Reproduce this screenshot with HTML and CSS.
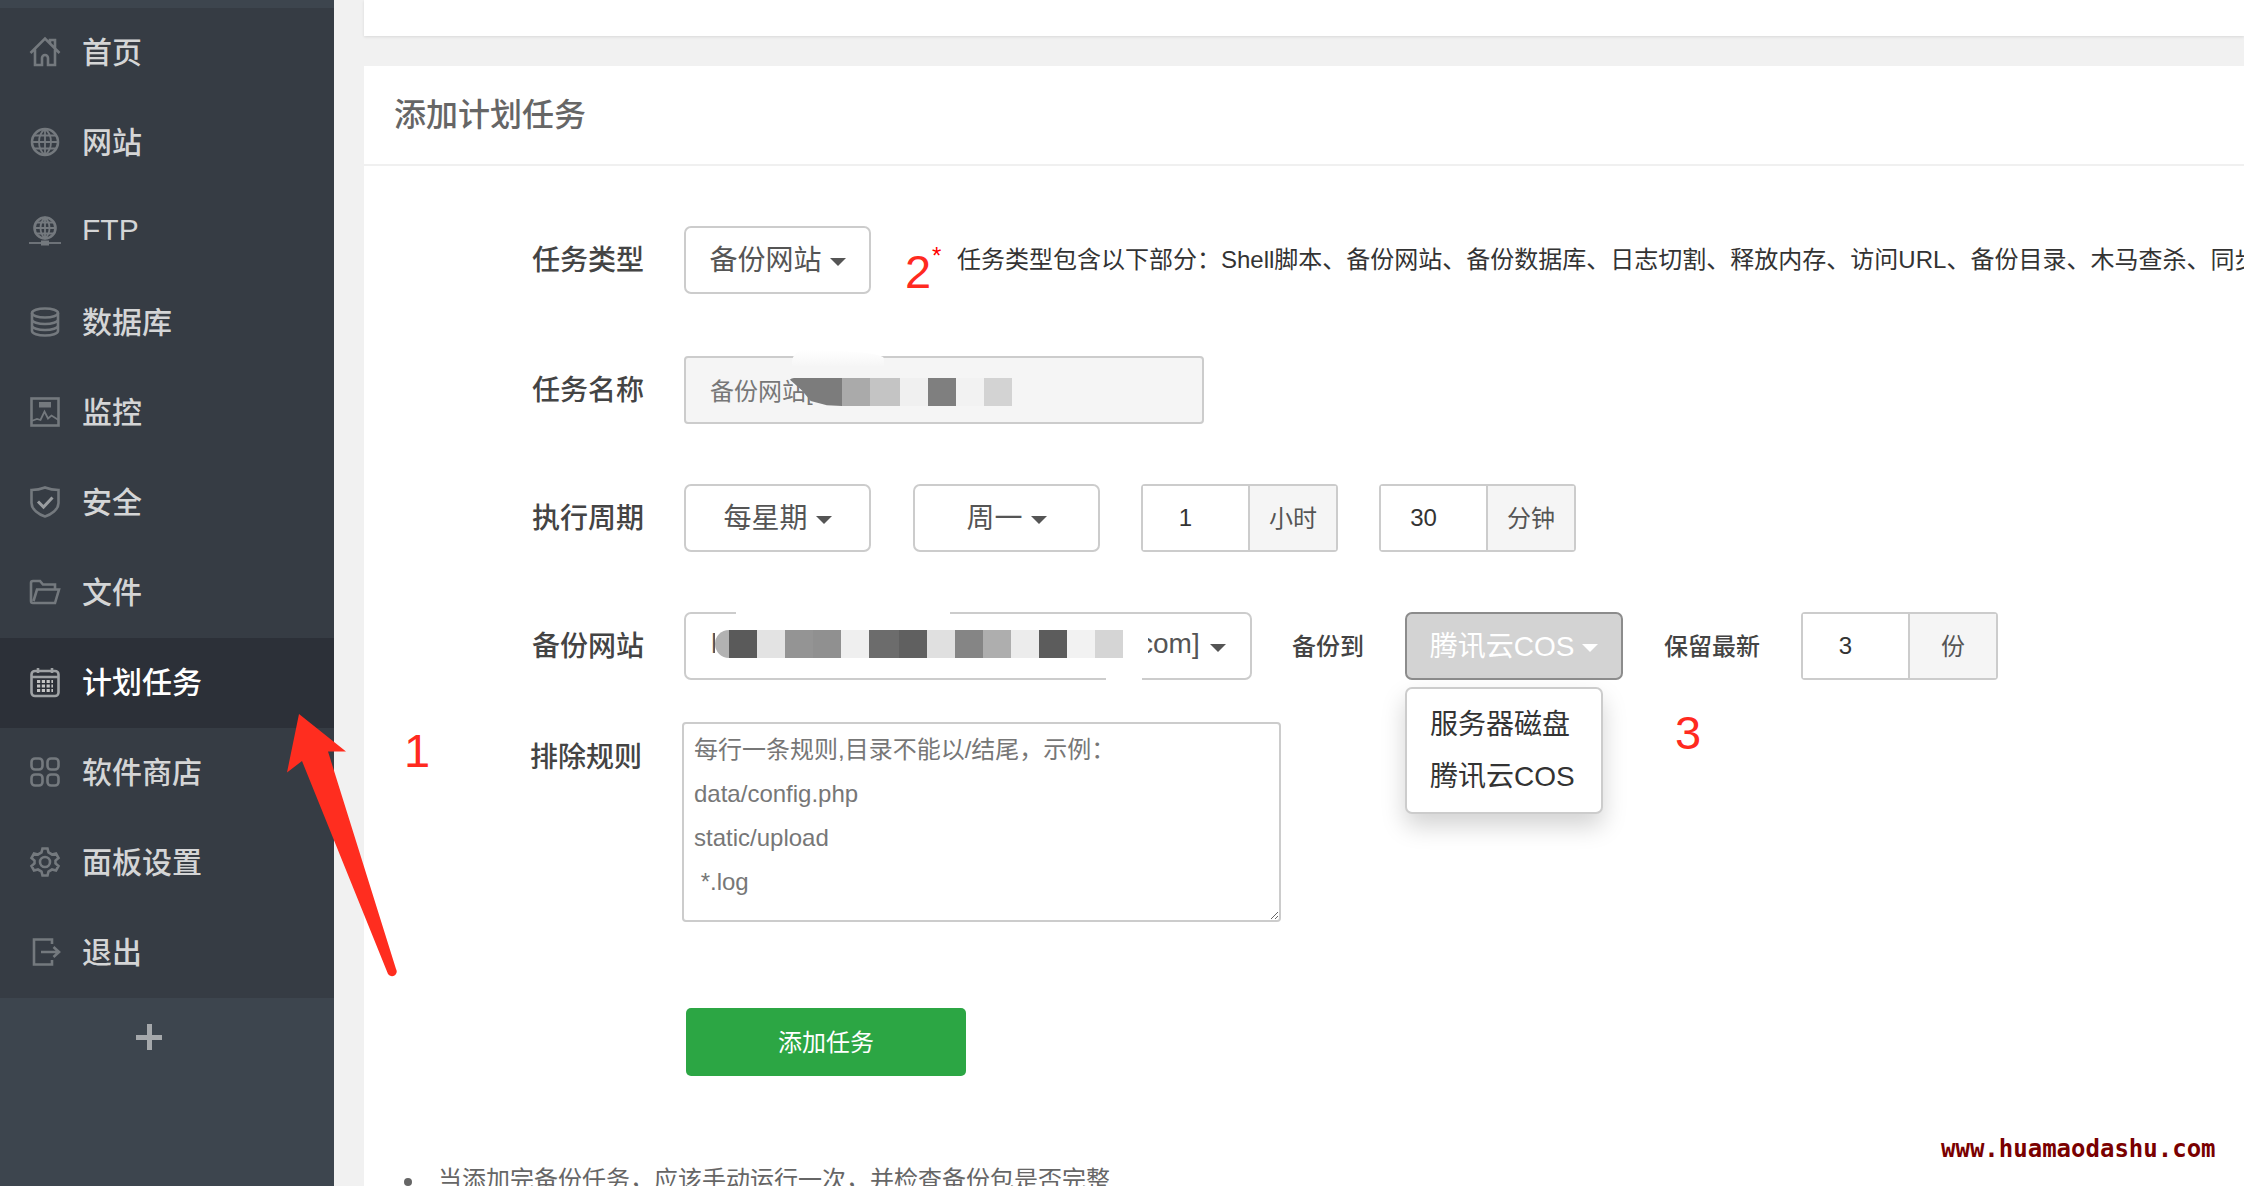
FILE: index.html
```html
<!DOCTYPE html>
<html lang="zh-CN">
<head>
<meta charset="utf-8">
<title>添加计划任务</title>
<link rel="stylesheet" href="styles.css">
</head>
<body>
<div class="app">
  <aside class="sidebar">
    <nav class="nav">
      <a class="nav-item"><svg class="ico" viewBox="0 0 30 30"><path d="M.5 16 15 1.500 29.500 16M5 12.500V28H12V21a3 3 0 0 1 6 0V28H25V12.500M20 6.500V3H25V11"/></svg><span>首页</span></a>
      <a class="nav-item"><svg class="ico" viewBox="0 0 30 30"><circle cx="15" cy="15" r="13"/><path class="thin" d="M15 2C7 8 7 22 15 28C23 22 23 8 15 2ZM15 2V28M2 15H28M4 8.500H26M4 21.500H26"/></svg><span>网站</span></a>
      <a class="nav-item"><svg class="ico" viewBox="0 0 30 30"><circle cx="15" cy="11" r="10.500"/><path class="thin" d="M15 .5C9 6 9 16 15 21.500C21 16 21 6 15 .5ZM15 .5V21.500M4.500 11H25.500M6 5.500H24M6 16.500H24"/><path class="thin" d="M-1 26H31"/><rect class="solid" x="11" y="23.500" width="8" height="5"/></svg><span>FTP</span></a>
      <a class="nav-item"><svg class="ico" viewBox="0 0 30 30"><ellipse cx="15" cy="6" rx="13" ry="4.500"/><path d="M2 6V24C2 26.500 8 28.500 15 28.500S28 26.500 28 24V6M2 12.500C2 15 8 17 15 17S28 15 28 12.500M2 18.500C2 21 8 23 15 23S28 21 28 18.500"/></svg><span>数据库</span></a>
      <a class="nav-item"><svg class="ico" viewBox="0 0 30 30"><rect x="1.500" y="1.500" width="27" height="27"/><rect class="solid" x="9" y="5" width="12" height="5.500"/><path class="thin" d="M1.500 24 7 22 10.500 23 14.500 14.500 18 21.500 21.500 18.500 28.500 23"/></svg><span>监控</span></a>
      <a class="nav-item"><svg class="ico ico-shield" viewBox="0 0 30 32"><path d="M15 1.500C10 3.500 6 4 1.500 4V17C1.500 23.500 9 28.500 15 30.500C21 28.500 28.500 23.500 28.500 17V4C24 4 20 3.500 15 1.500Z"/><path class="thick" d="M8 15.500 13.500 21 22.500 11.500"/></svg><span>安全</span></a>
      <a class="nav-item"><svg class="ico" viewBox="0 0 30 30"><path d="M5.500 26H3A2 2 0 0 1 1 24V6A2 2 0 0 1 3 4H10L13 7.500H25V12.500M5.500 26H25L29 12.500H7L3.500 24"/></svg><span>文件</span></a>
      <a class="nav-item nav-item-active"><svg class="ico" viewBox="0 0 30 30"><rect x="1.500" y="4" width="27" height="25" rx="3.500"/><path d="M1.500 10H28.500M8 1V6M22 1V6"/><path class="dots" d="M7 14.500H23M7 19H23M7 23.500H23"/></svg><span>计划任务</span></a>
      <a class="nav-item"><svg class="ico" viewBox="0 0 30 30"><rect x="1.500" y="1.500" width="11" height="11" rx="3.500"/><rect x="17.500" y="1.500" width="11" height="11" rx="3.500"/><rect x="1.500" y="17.500" width="11" height="11" rx="3.500"/><rect x="17.500" y="17.500" width="11" height="11" rx="3.500"/></svg><span>软件商店</span></a>
      <a class="nav-item"><svg class="ico" viewBox="0 0 30 30"><path d="M12.500 1.500H17.500L18.500 5.500 22 7.500 26 6.500 28.500 11 25.500 13.500V16.500L28.500 19 26 23.500 22 22.500 18.500 24.500 17.500 28.500H12.500L11.500 24.500 8 22.500 4 23.500 1.500 19 4.500 16.500V13.500L1.500 11 4 6.500 8 7.500 11.500 5.500Z"/><circle cx="15" cy="15" r="5"/></svg><span>面板设置</span></a>
      <a class="nav-item"><svg class="ico" viewBox="0 0 30 30"><path d="M22 7V2.500H4V27.500H22V23M11 15H28.500M23.500 10 29 15 23.500 20"/></svg><span>退出</span></a>
    </nav>
    <div class="add-row"><span class="plus"></span></div>
  </aside>

  <main class="main">
    <div class="card-top"></div>
    <section class="card">
      <header class="card-head">添加计划任务</header>
      <div class="form">
        <div class="row row-first">
          <label class="label">任务类型</label>
          <button class="select select-w">备份网站<i class="caret"></i></button>
          <span class="star">*</span>
          <span class="help">任务类型包含以下部分：Shell脚本、备份网站、备份数据库、日志切割、释放内存、访问URL、备份目录、木马查杀、同步时间</span>
        </div>
        <div class="row">
          <label class="label">任务名称</label>
          <div class="name-box">
            <span class="name-text">备份网站[</span>
            <span class="smudge"></span>
            <span class="mosaic mosaic-name">
              <b class="wide c7c"></b><b class="caa"></b><b class="mid cc4"></b><b class="cf0"></b><b class="c7f"></b><b class="cf2"></b><b class="cd3"></b>
            </span>
          </div>
        </div>
        <div class="row">
          <label class="label">执行周期</label>
          <button class="select select-w">每星期<i class="caret"></i></button>
          <button class="select select-w gap-42">周一<i class="caret"></i></button>
          <div class="group gap-41"><input class="group-input" value="1"><span class="group-addon">小时</span></div>
          <div class="group gap-41"><input class="group-input" value="30"><span class="group-addon">分钟</span></div>
        </div>
        <div class="row">
          <label class="label">备份网站</label>
          <button class="select select-site">
            <span class="site-h">h</span>
            <span class="mosaic">
              <b class="blob"></b><b class="c5a"></b><b class="ce3"></b><b class="c94"></b><b class="c90"></b><b class="cef"></b><b class="mid c6c"></b><b class="c60"></b><b class="ce0"></b><b class="c85"></b><b class="cae"></b><b class="cec"></b><b class="c5c"></b><b class="cf2"></b><b class="cd5"></b>
            </span>
            <span class="site-com">com]</span><i class="caret"></i>
            <span class="patch patch-top"></span><span class="patch patch-bottom"></span><span class="patch patch-c"></span>
          </button>
          <span class="inline-label gap-40">备份到</span>
          <div class="drop gap-41">
            <button class="select select-active">腾讯云COS<i class="caret caret-white"></i></button>
            <ul class="menu">
              <li>服务器磁盘</li>
              <li>腾讯云COS</li>
            </ul>
          </div>
          <span class="inline-label gap-41">保留最新</span>
          <div class="group gap-41"><input class="group-input" value="3"><span class="group-addon">份</span></div>
        </div>
        <div class="row row-area">
          <label class="label label-area">排除规则</label>
          <textarea class="area">每行一条规则,目录不能以/结尾，示例：
data/config.php
static/upload
 *.log</textarea>
        </div>
        <div class="row row-submit">
          <button class="submit">添加任务</button>
        </div>
        <ul class="notes">
          <li>当添加完备份任务，应该手动运行一次，并检查备份包是否完整</li>
        </ul>
      </div>
    </section>
  </main>
</div>

<div class="mark mark-1">1</div>
<div class="mark mark-2">2</div>
<div class="mark mark-3">3</div>
<svg class="arrow" viewBox="0 0 130 270"><path d="M12 0 59 37.500 41 37.500 109 255A4 4 0 0 1 101 260L15 47 0 58.500Z"/></svg>
<div class="watermark">www.huamaodashu.com</div>
</body>
</html>
```

FILE: styles.css
```css
* { box-sizing: border-box; }
html, body { margin: 0; height: 1186px; overflow: hidden; }
body {
  font-family: "Liberation Sans", "Noto Sans CJK SC", sans-serif;
  background: #f1f1f1;
  color: #444;
}
.app { display: flex; height: 1186px; width: 2244px; }

/* sidebar */
.sidebar {
  width: 334px;
  flex: none;
  background: #3d454e;
  padding-top: 8px;
  display: flex;
  flex-direction: column;
}
.nav { background: #363c44; }
.nav-item {
  display: flex;
  align-items: center;
  gap: 22px;
  height: 90px;
  padding: 0 0 2px 30px;
  font-size: 30px;
  font-weight: 500;
  color: #d4d5d6;
}
.nav-item span { padding-bottom: 4px; }
.nav-item-active { background: #2c3038; color: #fff; }
.ico {
  width: 30px;
  height: 30px;
  flex: none;
  fill: none;
  stroke: #74797e;
  stroke-width: 2.6;
  overflow: visible;
}
.ico-shield { height: 32px; }
.ico .thin { stroke-width: 1.8; }
.ico .solid { fill: #74797e; stroke: none; }
.ico .thick { stroke-width: 3; stroke: #9a9da0; }
.nav-item-active .ico { stroke: #9fa2a5; }
.ico .dots { stroke-width: 3; stroke-dasharray: 3.2 1.6; stroke: #c4c4c4; }
.add-row { display: flex; justify-content: center; padding: 26px 36px 0 0; }
.plus {
  width: 26px;
  height: 26px;
  background:
    linear-gradient(#a5a8ab, #a5a8ab) center / 26px 5px no-repeat,
    linear-gradient(#a5a8ab, #a5a8ab) center / 5px 26px no-repeat;
}

/* main */
.main { flex: 1; min-width: 0; padding-left: 30px; display: flex; flex-direction: column; gap: 30px; }
.card-top { height: 36px; background: #fff; box-shadow: 0 1px 3px rgba(0,0,0,.1); flex: none; }
.card { flex: 1; min-height: 0; background: #fff; overflow: hidden; }
.card-head {
  height: 100px;
  padding: 0 0 6px 30px;
  display: flex;
  align-items: center;
  font-size: 32px;
  font-weight: 500;
  color: #666;
  border-bottom: 2px solid #f0f0f0;
}
.form { padding: 60px 0 0 168px; }
.row { display: flex; align-items: center; height: 68px; margin-bottom: 60px; white-space: nowrap; }
.row-first { margin-bottom: 62px; }
.label { width: 152px; flex: none; font-size: 28px; font-weight: 500; color: #444; padding-bottom: 4px; }
.select {
  height: 68px;
  border: 2px solid #ccc;
  border-radius: 7px;
  background: #fff;
  font: inherit;
  font-size: 28px;
  color: #555;
  display: inline-flex;
  align-items: center;
  justify-content: center;
  gap: 8px;
  padding: 0 0 4px;
  flex: none;
}
.select-w { width: 187px; }
.caret {
  width: 0;
  height: 0;
  border-left: 8px solid transparent;
  border-right: 8px solid transparent;
  border-top: 8px solid #555;
  margin-top: 8px;
}
.caret-white { border-top-color: #fff; }
.gap-42 { margin-left: 42px; }
.gap-40 { margin-left: 40px; }
.gap-41 { margin-left: 41px; }
.star { color: #f00; font-size: 24px; margin-left: 61px; flex: none; width: 25px; align-self: flex-start; margin-top: 16px; }
.help { font-size: 24px; color: #333; padding-bottom: 6px; }

.name-box {
  position: relative;
  width: 520px;
  height: 68px;
  border: 2px solid #ccc;
  border-radius: 4px;
  background: #f5f5f5;
  display: flex;
  align-items: center;
  padding: 0 0 2px 24px;
  font-size: 24px;
  color: #777;
}
.smudge {
  position: absolute;
  left: 106px;
  top: -8px;
  width: 92px;
  height: 16px;
  background: linear-gradient(#fff, #f6f6f6);
  border-radius: 16px 100% 0 0 / 14px 10px 0 0;
}
.mosaic { display: flex; height: 28px; flex: none; }
.mosaic b { display: block; width: 28px; height: 28px; }
.mosaic-name { position: absolute; left: 102px; top: 20px; }
.mosaic b.wide {
  width: 54px;
  border-radius: 6px 0 0 0;
  clip-path: polygon(0 0, 100% 0, 100% 100%, 72% 97%, 42% 82%, 26% 45%);
}
.mosaic b.mid { width: 30px; }
.mosaic b.blob { width: 14px; background: #b2b2b2; border-radius: 14px 0 0 14px; }
.c7c { background: #7c7c7c; } .caa { background: #aaa; } .cc4 { background: #c4c4c4; }
.cf0 { background: #f0f0f0; } .c7f { background: #7f7f7f; } .cf2 { background: #f2f2f2; }
.cd3 { background: #d3d3d3; } .c5a { background: #5a5a5a; } .ce3 { background: #e3e3e3; }
.c94 { background: #949494; } .c90 { background: #909090; } .cef { background: #efefef; }
.c6c { background: #6c6c6c; } .c60 { background: #606060; } .ce0 { background: #e0e0e0; }
.c85 { background: #858585; } .cae { background: #aeaeae; } .cec { background: #ececec; }
.c5c { background: #5c5c5c; } .cd5 { background: #d5d5d5; }

.group { display: flex; width: 197px; height: 68px; border: 2px solid #ccc; border-radius: 4px; flex: none; }
.group-input {
  width: 107px;
  border: 0;
  border-right: 2px solid #ccc;
  padding: 0 20px 0 0;
  text-align: center;
  font: inherit;
  font-size: 24px;
  color: #333;
  background: #fff;
  outline: 0;
}
.group-addon {
  flex: 1;
  background: #f5f5f5;
  font-size: 24px;
  color: #555;
  display: flex;
  align-items: center;
  justify-content: center;
  padding-bottom: 4px;
}
.select-site { position: relative; width: 568px; justify-content: flex-start; gap: 0; padding-left: 25px; }
.site-h { width: 4px; overflow: hidden; color: #555; }
.site-com { margin-left: 16px; }
.select-site .caret { margin-left: 10px; }
.patch { position: absolute; background: #fff; }
.patch-top { left: 50px; top: -4px; width: 214px; height: 8px; }
.patch-bottom { left: 420px; bottom: -4px; width: 36px; height: 10px; }
.patch-c { left: 440px; top: 16px; width: 22px; height: 38px; }
.inline-label { font-size: 24px; font-weight: 500; color: #444; padding-bottom: 4px; }
.drop { position: relative; flex: none; }
.select-active { width: 218px; background: #d3d3d3; border-color: #8c8c8c; color: #fff; }
.menu {
  position: absolute;
  left: 0;
  top: 75px;
  width: 198px;
  margin: 0;
  padding: 10px 0 9px 23px;
  list-style: none;
  background: #fff;
  border: 2px solid #ccc;
  border-radius: 7px;
  box-shadow: 0 12px 24px rgba(0,0,0,.175);
  font-size: 28px;
  line-height: 52px;
  color: #333;
}
.row-area { align-items: flex-start; height: 200px; margin: -18px 0 86px -2px; }
.label-area { width: 152px; padding-top: 13px; }
.area {
  display: block;
  width: 599px;
  height: 200px;
  border: 2px solid #ccc;
  border-radius: 4px;
  padding: 4px 10px;
  margin: 0;
  font: inherit;
  font-size: 24px;
  line-height: 44px;
  color: #777;
  outline: 0;
  overflow: hidden;
}
.row-submit { padding-left: 154px; margin-bottom: 87px; }
.submit {
  width: 280px;
  height: 68px;
  background: #2ca644;
  border: 0;
  border-radius: 5px;
  color: #fff;
  font: inherit;
  font-size: 24px;
  padding: 0 0 3px;
}
.notes {
  list-style: none;
  margin: 0 0 0 -168px;
  padding: 0 0 0 74px;
  position: relative;
  font-size: 24px;
  color: #666;
  line-height: 34px;
}
.notes::before {
  content: "";
  position: absolute;
  left: 40px;
  top: 15px;
  width: 8px;
  height: 8px;
  border-radius: 50%;
  background: #666;
}

/* annotations drawn over the screenshot */
.mark {
  position: absolute;
  font-size: 47px;
  line-height: 47px;
  color: #ff2a1f;
}
.mark-1 { left: 404px; top: 727px; }
.mark-2 { left: 905px; top: 248px; }
.mark-3 { left: 1675px; top: 709px; }
.arrow { position: absolute; left: 287px; top: 714px; width: 130px; height: 270px; fill: #ff2d1f; overflow: visible; }
.watermark {
  position: absolute;
  left: 1941px;
  top: 1135px;
  font-family: "DejaVu Sans Mono", monospace;
  font-weight: 700;
  font-size: 24px;
  line-height: 28px;
  color: #7a0000;
}
```
